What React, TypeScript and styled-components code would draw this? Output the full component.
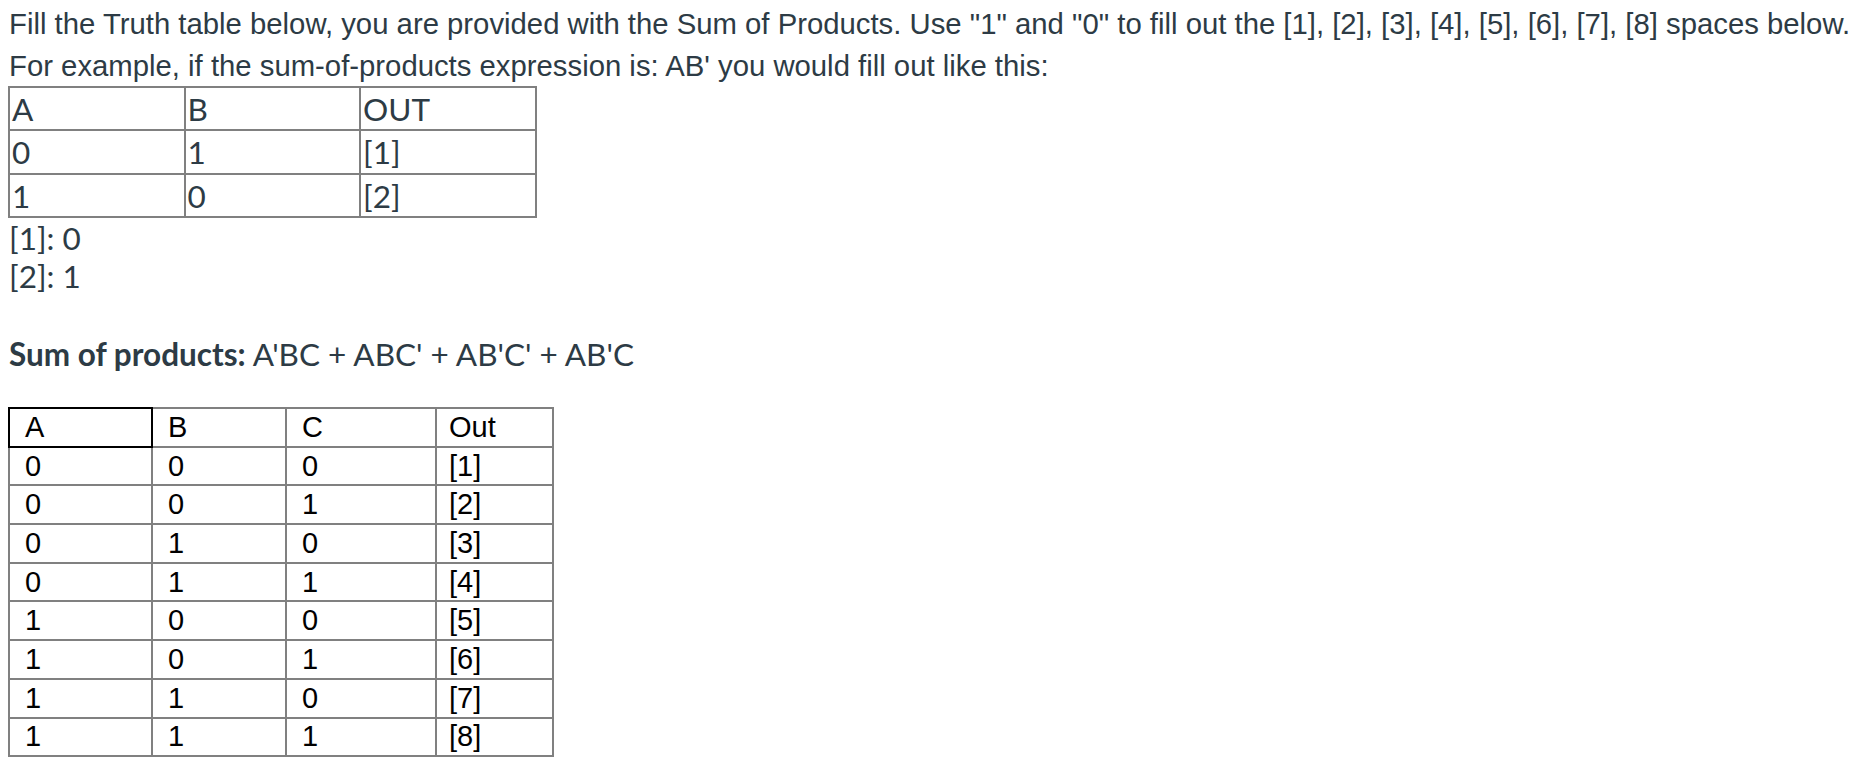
import React from 'react';
import styled, { createGlobalStyle } from 'styled-components';

const GlobalStyle = createGlobalStyle`
  body {
    margin: 0;
    background: #ffffff;
  }
`;

const Page = styled.div`
  padding: 3px 0 0 9px;
  color: #2d3b45;
`;

const Prompt = styled.div`
  font-family: 'Liberation Sans', Arial, sans-serif;
  font-size: 29.3px;
  line-height: 42px;
  white-space: nowrap;
`;

const ExampleTable = styled.table`
  border-collapse: collapse;
  table-layout: fixed;
  margin: -1.5px 0 0 -1px;
  font-family: Lato, 'Noto Sans', sans-serif;
  font-size: 31.5px;
  color: #2d3b45;
`;

const ExampleCell = styled.td`
  width: 169.5px;
  height: 38.5px;
  padding: 2px 2px 1px;
  border: 2px solid #808080;
  vertical-align: top;
  line-height: normal;
`;

const Answers = styled.div`
  margin-top: 1px;
  font-family: Lato, 'Noto Sans', sans-serif;
  font-size: 31.5px;
  line-height: 38px;
`;

const Expression = styled.div`
  margin-top: 40px;
  font-family: Lato, 'Noto Sans', sans-serif;
  font-size: 31.5px;
  line-height: 38px;
`;

const Label = styled.strong`
  font-weight: 700;
`;

const TruthTable = styled.table`
  border-collapse: collapse;
  table-layout: fixed;
  margin: 34px 0 0 -1px;
  font-family: 'Liberation Sans', Arial, sans-serif;
  font-size: 29px;
  color: #000000;
`;

const TruthCell = styled.td<{ $w: number; $pad: number; $active?: boolean }>`
  width: ${(p) => p.$w}px;
  height: 36.7px;
  padding: 0 0 0 ${(p) => p.$pad}px;
  border: 2px solid ${(p) => (p.$active ? '#000000' : '#808080')};
  vertical-align: middle;
  line-height: normal;
`;

// outer column widths stay the same, the last column sits a little closer to its border
const columns = [
  { w: 126, pad: 15 },
  { w: 117, pad: 15 },
  { w: 133, pad: 15 },
  { w: 103, pad: 12 },
];

const rows = [
  ['0', '0', '0', '[1]'],
  ['0', '0', '1', '[2]'],
  ['0', '1', '0', '[3]'],
  ['0', '1', '1', '[4]'],
  ['1', '0', '0', '[5]'],
  ['1', '0', '1', '[6]'],
  ['1', '1', '0', '[7]'],
  ['1', '1', '1', '[8]'],
];

export default function App() {
  return (
    <>
      <GlobalStyle />
      <Page>
        <Prompt>
          Fill the Truth table below, you are provided with the Sum of Products. Use "1" and "0" to fill out the [1], [2],
          [3], [4], [5], [6], [7], [8] spaces below.
          <br />
          For example, if the sum-of-products expression is: AB' you would fill out like this:
        </Prompt>

        <ExampleTable>
          <tbody>
            <tr>
              <ExampleCell>A</ExampleCell>
              <ExampleCell>B</ExampleCell>
              <ExampleCell>OUT</ExampleCell>
            </tr>
            <tr>
              <ExampleCell>0</ExampleCell>
              <ExampleCell>1</ExampleCell>
              <ExampleCell>[1]</ExampleCell>
            </tr>
            <tr>
              <ExampleCell>1</ExampleCell>
              <ExampleCell>0</ExampleCell>
              <ExampleCell>[2]</ExampleCell>
            </tr>
          </tbody>
        </ExampleTable>

        <Answers>
          [1]: 0
          <br />
          [2]: 1
        </Answers>

        <Expression>
          <Label>Sum of products:</Label> A'BC + ABC' + AB'C' + AB'C
        </Expression>

        <TruthTable>
          <tbody>
            <tr>
              {['A', 'B', 'C', 'Out'].map((h, i) => (
                <TruthCell key={h} $w={columns[i].w} $pad={columns[i].pad} $active={i === 0}>
                  {h}
                </TruthCell>
              ))}
            </tr>
            {rows.map((row, r) => (
              <tr key={r}>
                {row.map((v, i) => (
                  <TruthCell key={i} $w={columns[i].w} $pad={columns[i].pad}>
                    {v}
                  </TruthCell>
                ))}
              </tr>
            ))}
          </tbody>
        </TruthTable>
      </Page>
    </>
  );
}
